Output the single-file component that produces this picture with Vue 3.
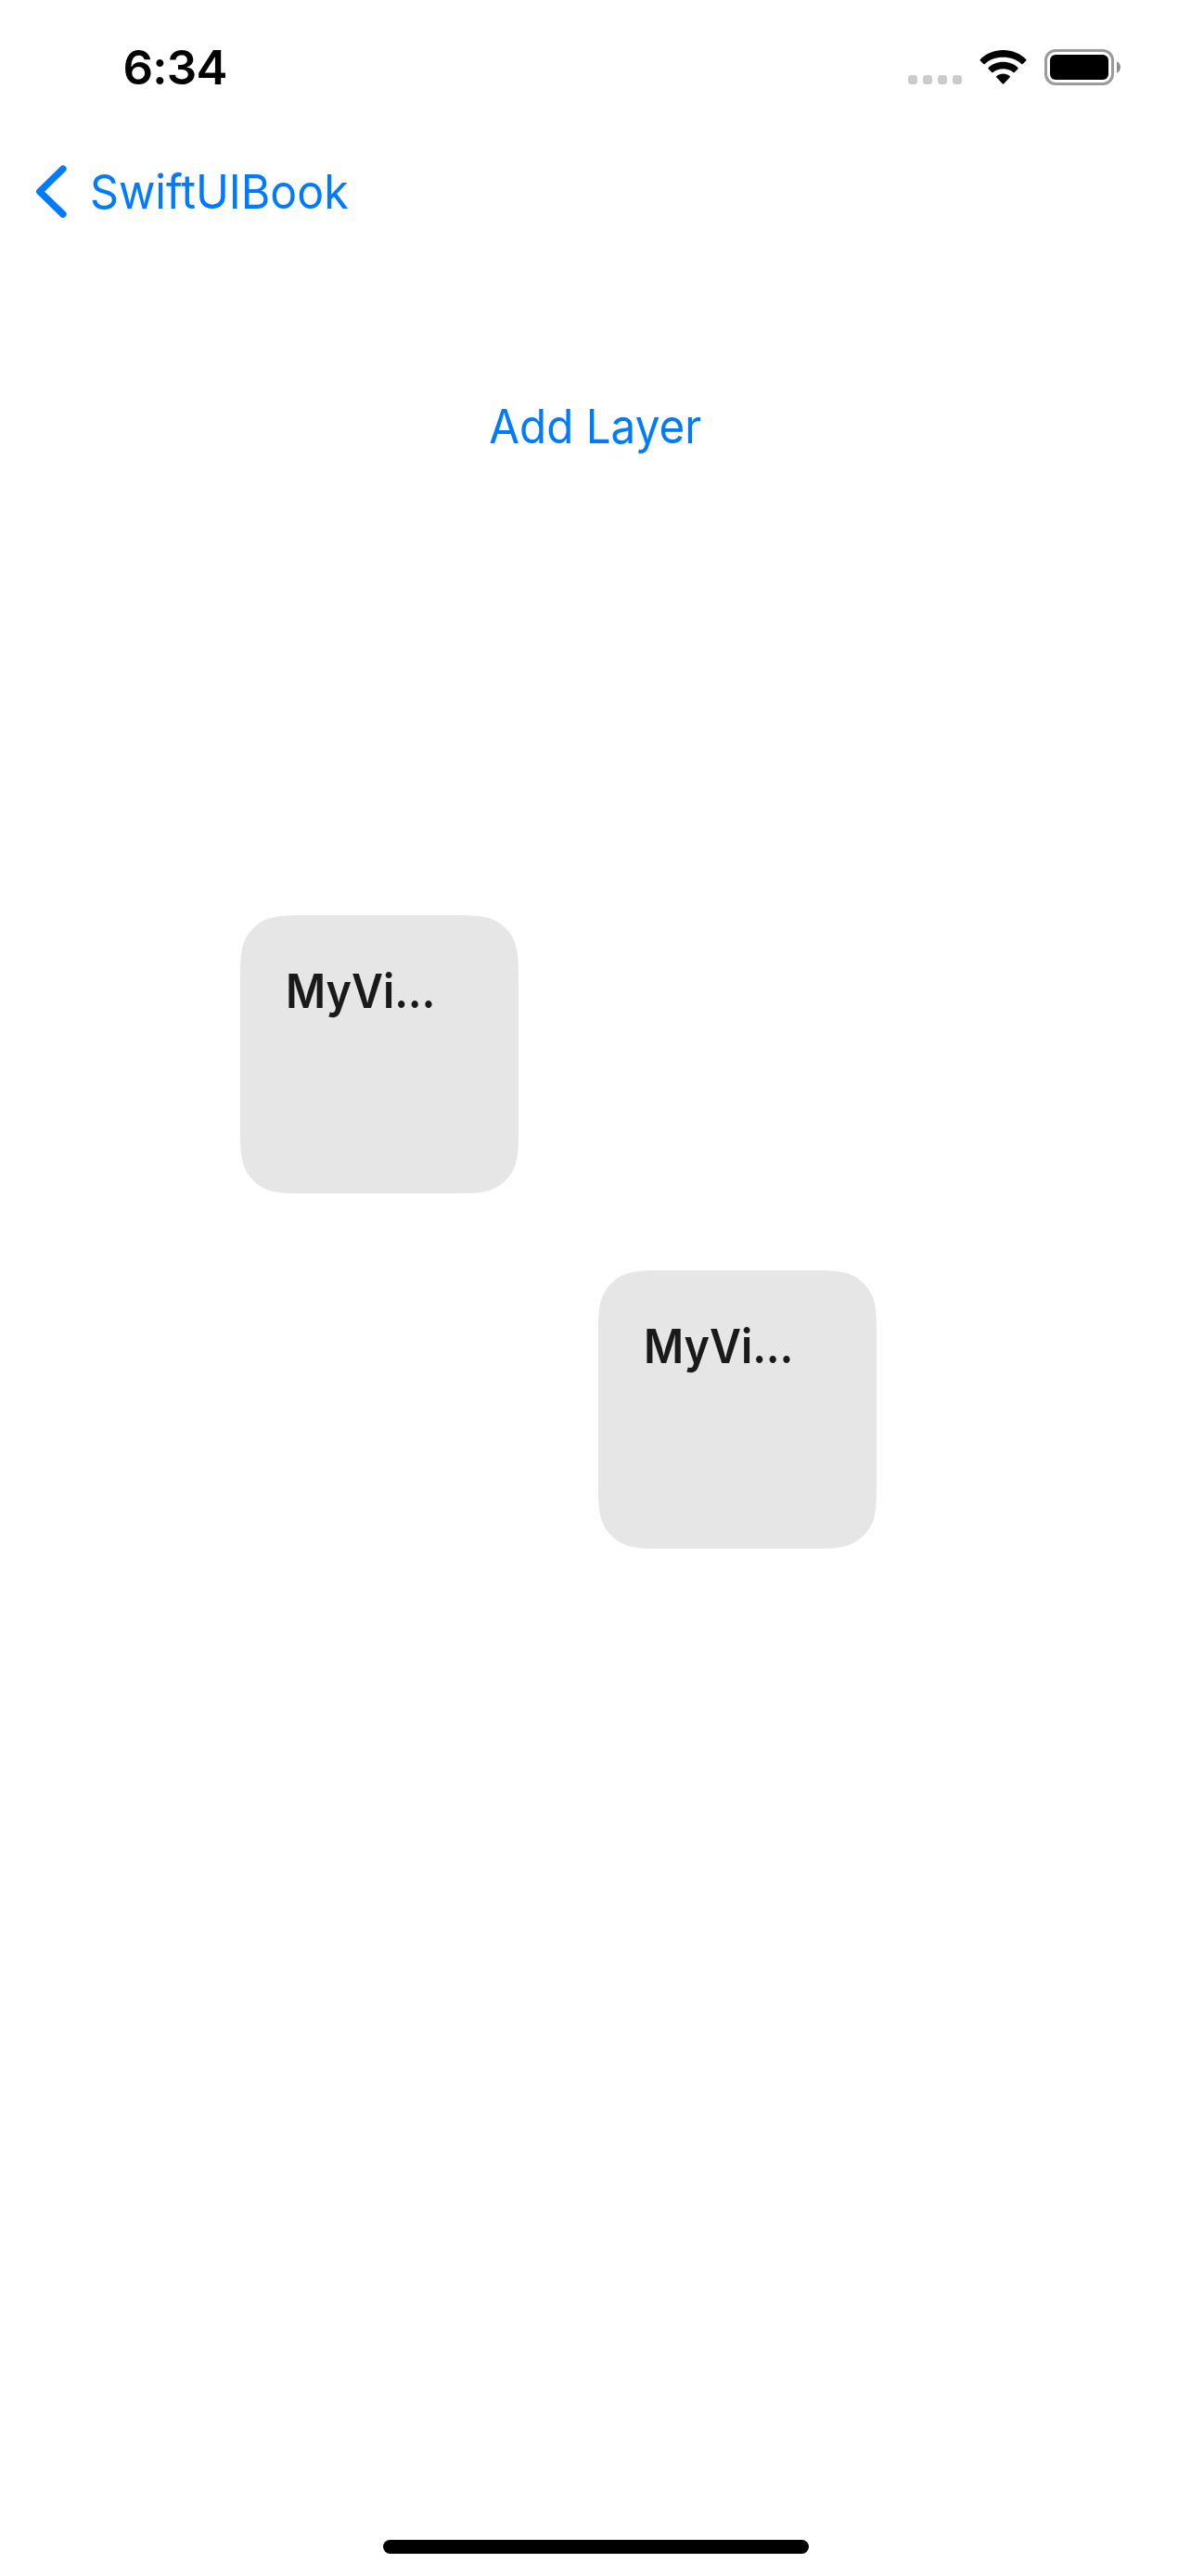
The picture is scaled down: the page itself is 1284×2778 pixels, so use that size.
<script setup>
const layers = [
  { id: 1, title: 'MyVi', x: 259, y: 987 },
  { id: 2, title: 'MyVi', x: 645, y: 1370 },
]
const dots = [0, 16, 32, 48]
</script>

<template>
  <div class="screen">
    <header class="status">
      <span class="time">6:34</span>
      <div class="indicators">
        <svg class="signal" width="58" height="10" viewBox="0 0 58 10">
          <rect v-for="x in dots" :key="x" :x="x" width="10" height="10" rx="3.4" fill="#cbcbcb" />
        </svg>
        <svg class="wifi" width="51" height="38" viewBox="0 0 51 38">
          <path d="M25.5 0C35.2 0 43.9 3.8 50.2 10Q50.9 10.7 50.2 11.4L46.6 15Q45.9 15.7 45.2 15C40.1 10.2 33.2 7.8 25.5 7.8S10.9 10.2 5.8 15Q5.1 15.7 4.4 15L.8 11.4Q.1 10.7 .8 10C7.1 3.8 15.8 0 25.5 0Z" />
          <path d="M25.5 12.8C31.8 12.8 37.4 15.1 41.4 18.9Q42.1 19.6 41.4 20.3L37.7 24Q37 24.7 36.3 24C33.4 21.5 29.6 20.3 25.5 20.3S17.6 21.5 14.7 24Q14 24.7 13.3 24L9.6 20.3Q8.9 19.6 9.6 18.9C13.6 15.1 19.2 12.8 25.5 12.8Z" />
          <path d="M25.5 25.5C28.3 25.5 30.7 26.4 32.6 28Q33.4 28.8 32.6 29.6L26.3 36.2Q25.5 37 24.7 36.2L18.4 29.6Q17.6 28.8 18.4 28C20.3 26.4 22.7 25.5 25.5 25.5Z" />
        </svg>
        <svg class="battery" width="82" height="39" viewBox="0 0 82 39">
          <rect x="1.5" y="1.5" width="72" height="36" rx="10.5" fill="none" stroke="#9b9b9b" stroke-width="3" />
          <rect x="6" y="6" width="63" height="27" rx="6" />
          <path d="M78 13.2C80.4 14.2 82 16.8 82 19.5S80.4 24.8 78 25.8Z" fill="#8e8e8e" />
        </svg>
      </div>
    </header>

    <nav class="nav">
      <svg class="chevron" width="34" height="57" viewBox="0 0 34 57">
        <path d="M29.9 4.2 4.8 28.6 29.9 53" fill="none" stroke="#007aff" stroke-width="7.4" stroke-linecap="round" stroke-linejoin="round" />
      </svg>
      <span class="back">SwiftUIBook</span>
    </nav>

    <main class="content">
      <button class="add" type="button">Add Layer</button>
    </main>

    <article
      v-for="layer in layers"
      :key="layer.id"
      class="layer"
      :style="{ left: layer.x + 'px', top: layer.y + 'px' }"
    >
      <svg class="shape" width="300" height="300" viewBox="0 0 300 300">
        <path d="M73.4 0H226.6C247.8 0 258.3 0 269.7 3.6 282.1 8.1 291.9 17.9 296.4 30.3 300 41.7 300 52.2 300 73.4V226.6C300 247.8 300 258.3 296.4 269.7 291.9 282.1 282.1 291.9 269.7 296.4 258.3 300 247.8 300 226.6 300H73.4C52.2 300 41.7 300 30.3 296.4 17.9 291.9 8.1 282.1 3.6 269.7 0 258.3 0 247.8 0 226.6V73.4C0 52.2 0 41.7 3.6 30.3 8.1 17.9 17.9 8.1 30.3 3.6 41.7 0 52.2 0 73.4 0Z" fill="#e6e6e6" />
      </svg>
      <h2 class="title">{{ layer.title }}<span class="more">...</span></h2>
    </article>

    <div class="home"></div>
  </div>
</template>

<style>
body {
  margin: 0;
  background: #fff;
}
</style>

<style scoped>
.screen {
  position: relative;
  display: flex;
  flex-direction: column;
  width: 1284px;
  height: 2778px;
  overflow: hidden;
  background: #fff;
  font-family: Inter, "Liberation Sans", sans-serif;
  font-size: 51px;
  line-height: 60px;
}

.status {
  display: flex;
  justify-content: space-between;
  box-sizing: border-box;
  height: 141px;
  padding: 42px 76px 0 132.5px;
}

.time {
  margin-top: 1px;
  font-weight: 600;
  letter-spacing: -0.8px;
}

.indicators {
  display: flex;
  align-items: flex-start;
}

.signal {
  margin: 39px 19px 0 0;
}

.wifi {
  margin: 12px 19px 0 0;
}

.battery {
  margin-top: 11px;
}

.nav {
  display: flex;
  align-items: flex-start;
  box-sizing: border-box;
  height: 132px;
  padding: 37px 0 0 38px;
  color: #007aff;
}

.back {
  margin: -1px 0 0 24.5px;
  transform: scaleX(0.945);
  transform-origin: left;
}

.content {
  display: flex;
  justify-content: center;
  padding-top: 157px;
}

.add {
  padding: 0;
  border: 0;
  background: none;
  color: #007aff;
  font: inherit;
  transform: scaleX(0.933);
}

.layer {
  position: absolute;
  box-sizing: border-box;
  width: 300px;
  height: 300px;
  padding: 52px 48px 48px 49px;
}

.shape {
  position: absolute;
  inset: 0;
}

.title {
  position: relative;
  margin: 0;
  color: #1a1a1a;
  font-size: 51px;
  font-weight: 600;
  white-space: nowrap;
  transform: scaleX(0.917);
  transform-origin: left;
}

.more {
  letter-spacing: -0.4px;
}

.home {
  width: 459px;
  height: 15px;
  margin: auto auto 24px 413px;
  border-radius: 8px;
  background: #000;
}
</style>
